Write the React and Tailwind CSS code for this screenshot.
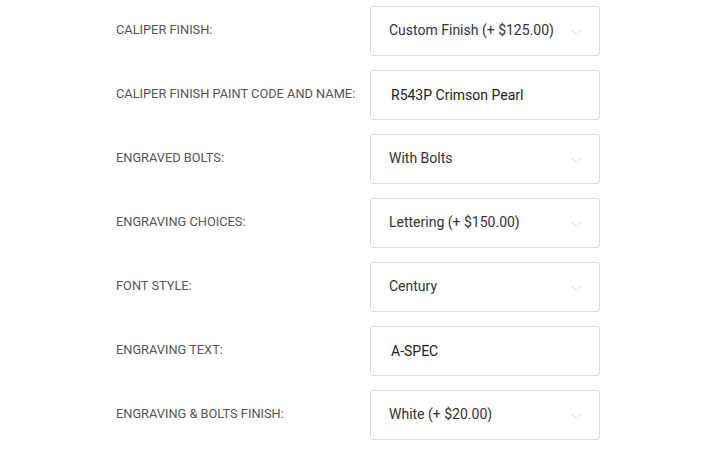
import React from 'react';

const rows = [
  { label: 'CALIPER FINISH:', value: 'Custom Finish (+ $125.00)', type: 'select' },
  { label: 'CALIPER FINISH PAINT CODE AND NAME:', value: 'R543P Crimson Pearl', type: 'text' },
  { label: 'ENGRAVED BOLTS:', value: 'With Bolts', type: 'select' },
  { label: 'ENGRAVING CHOICES:', value: 'Lettering (+ $150.00)', type: 'select' },
  { label: 'FONT STYLE:', value: 'Century', type: 'select' },
  { label: 'ENGRAVING TEXT:', value: 'A-SPEC', type: 'text' },
  { label: 'ENGRAVING & BOLTS FINISH:', value: 'White (+ $20.00)', type: 'select' },
];

function Chevron() {
  return (
    <svg width="11" height="7" viewBox="0 0 11 7" fill="none" className="shrink-0 mt-[3px]">
      <path d="M0.5 0.8 L5.5 5.8 L10.5 0.8" stroke="#d2d2d2" strokeWidth="1" />
    </svg>
  );
}

export default function App() {
  return (
    <div className="w-[717px] h-[452px] bg-white font-['Roboto',sans-serif] overflow-hidden">
      <div className="flex flex-col gap-[14px] pt-[6px] pl-[116px]">
        {rows.map((row) => (
          <div key={row.label} className="flex items-center h-[50px]">
            <div className="w-[254px] text-[12.8px] text-[#555] -mt-[2px]">{row.label}</div>
            <div className="w-[230px] h-[50px] border border-[#dedede] rounded-[3px] flex items-center">
              {row.type === 'select' ? (
                <div className="flex items-center justify-between w-full pl-[18px] pr-[17px]">
                  <span className="text-[14px] text-[#333] -mt-[2px]">{row.value}</span>
                  <Chevron />
                </div>
              ) : (
                <span className="pl-[20px] text-[14px] text-[#222]">{row.value}</span>
              )}
            </div>
          </div>
        ))}
      </div>
    </div>
  );
}
